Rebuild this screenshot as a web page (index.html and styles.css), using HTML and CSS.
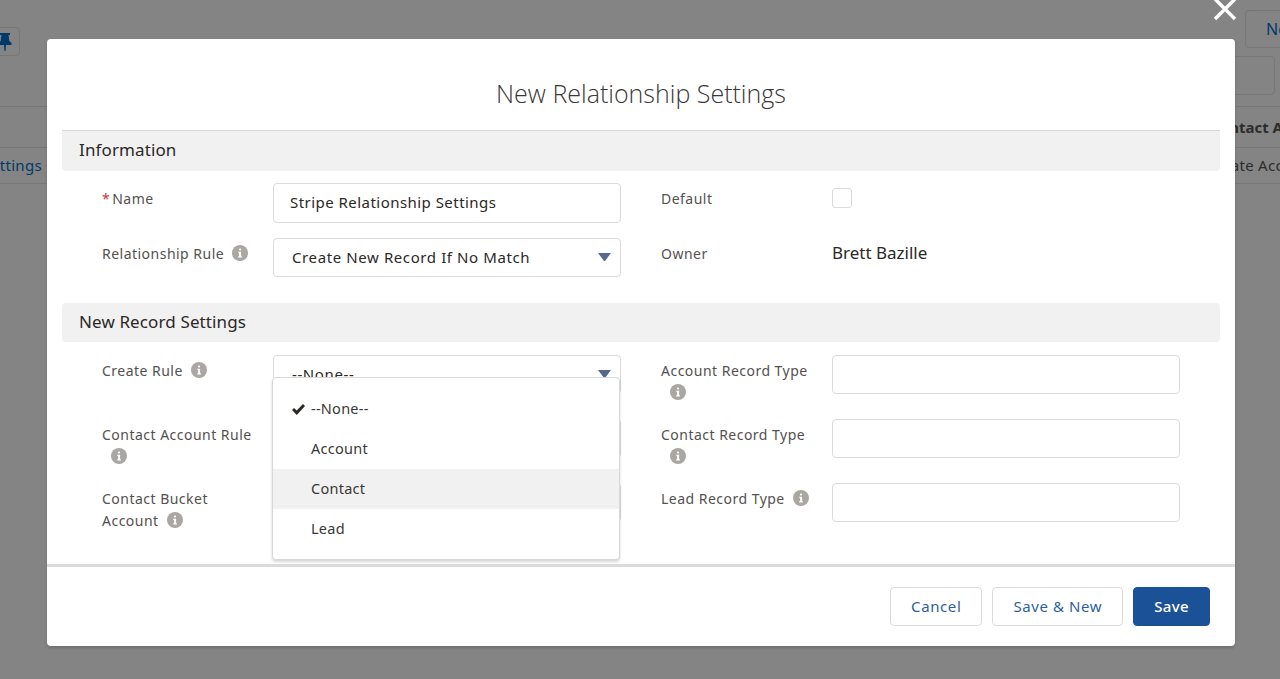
FILE: index.html
```html
<!DOCTYPE html>
<html lang="en">
<head>
<meta charset="utf-8">
<title>New Relationship Settings</title>
<link rel="stylesheet" href="styles.css">
</head>
<body>
<svg class="defs" width="0" height="0" aria-hidden="true">
  <symbol id="info" viewBox="0 0 16 16">
    <circle cx="8" cy="8" r="8" fill="#aaa7a2"/>
    <rect x="6.9" y="3.4" width="2.2" height="2.2" rx="1" fill="#fff"/>
    <path d="M6.3 6.8h2.8v4.4h.8v1.2H6.2v-1.2h.9V8H6.3z" fill="#fff"/>
  </symbol>
  <symbol id="caret" viewBox="0 0 13 8">
    <path d="M0 0h13L7 8h-1z" fill="#54698d"/>
  </symbol>
</svg>

<div class="page">
  <div class="page-actions">
    <button class="bg-btn pin-btn" type="button">
      <svg width="14" height="18" viewBox="0 0 14 18"><path d="M2 0h10v2H10.500l.8 6 2.200 2v2H8l-.5 6h-1L6 12H.5v-2l2.200-2 .8-6H2z" fill="#00396b"/></svg>
    </button>
    <div class="right-actions">
      <button class="bg-btn new-btn" type="button">New</button>
      <div class="bg-search"></div>
    </div>
  </div>
  <div class="bg-table">
    <div class="bg-head"><span>Contact A</span></div>
    <div class="bg-row"><a>Stripe Relationship Settings</a><span>Create Acc</span></div>
  </div>
</div>

<svg class="close" width="24" height="24" viewBox="0 0 24 24"><path d="M2 2l20 20M22 2L2 22" stroke="#fff" stroke-width="3.400" fill="none"/></svg>

<main class="modal">
  <h1 class="modal-title">New Relationship Settings</h1>

  <section class="section first">
    <h2 class="section-head">Information</h2>
    <div class="form-grid info-grid">
      <label class="lbl"><span class="req">*</span>Name</label>
      <div class="input name-input">Stripe Relationship Settings</div>
      <label class="lbl">Default</label>
      <div class="check-cell"><span class="checkbox"></span></div>

      <label class="lbl">Relationship Rule <svg class="info"><use href="#info"/></svg></label>
      <div class="input select">Create New Record If No Match<svg class="caret"><use href="#caret"/></svg></div>
      <label class="lbl">Owner</label>
      <div class="owner">Brett Bazille</div>
    </div>
  </section>

  <section class="section">
    <h2 class="section-head">New Record Settings</h2>
    <div class="form-grid record-grid">
      <label class="lbl">Create Rule <svg class="info"><use href="#info"/></svg></label>
      <div class="select-wrap">
        <div class="input select">--None--<svg class="caret"><use href="#caret"/></svg></div>
        <ul class="menu">
          <li class="menu-item">
            <svg class="tick" width="13" height="11" viewBox="0 0 13 11"><path d="M0 6l2-2 2.700 2.500L11 0l2 2-8.200 9z" fill="#2b2826"/></svg>--None--
          </li>
          <li class="menu-item">Account</li>
          <li class="menu-item hover">Contact</li>
          <li class="menu-item">Lead</li>
        </ul>
      </div>
      <label class="lbl">Account Record Type <svg class="info wrap-info"><use href="#info"/></svg></label>
      <div class="input"></div>

      <label class="lbl">Contact Account Rule <svg class="info wrap-info"><use href="#info"/></svg></label>
      <div class="input"></div>
      <label class="lbl">Contact Record Type <svg class="info wrap-info"><use href="#info"/></svg></label>
      <div class="input"></div>

      <label class="lbl narrow">Contact Bucket Account <svg class="info"><use href="#info"/></svg></label>
      <div class="input"></div>
      <label class="lbl">Lead Record Type <svg class="info"><use href="#info"/></svg></label>
      <div class="input"></div>
    </div>
  </section>

  <footer class="modal-footer">
    <button class="btn" type="button">Cancel</button>
    <button class="btn" type="button">Save &amp; New</button>
    <button class="btn primary" type="button">Save</button>
  </footer>
</main>
</body>
</html>
```

FILE: styles.css
```css
* { box-sizing: border-box; }
html, body { margin: 0; height: 679px; overflow: hidden; }
body {
  background: #848484;
  font-family: "Noto Sans", "Open Sans", sans-serif;
  color: #2b2826;
  font-size: 14px;
}
.defs { position: absolute; }

/* dimmed page behind the modal */
.page { height: 679px; overflow: hidden; }
.page-actions {
  display: flex;
  justify-content: space-between;
  height: 106px;
}
.bg-btn {
  background: #848484;
  border: 1px solid #767676;
  border-radius: 4px;
  font: inherit;
  color: #00396b;
  padding: 0;
}
.pin-btn {
  width: 30px;
  height: 29px;
  margin: 27px 0 0 -10px;
  display: flex;
  align-items: center;
  justify-content: center;
}
.right-actions { width: 45px; padding-top: 10px; margin-right: -10px; }
.new-btn {
  display: block;
  width: 55px;
  height: 38px;
  text-align: left;
  padding-left: 20px;
  font-size: 16px;
}
.bg-search {
  width: 55px;
  height: 39px;
  margin: 8px 0 0 -25px;
  border: 1px solid #767676;
  border-radius: 4px;
}
.bg-table { border-top: 1px solid #767676; }
.bg-head {
  height: 41px;
  border-bottom: 1px solid #767676;
  display: flex;
  justify-content: flex-end;
  align-items: center;
  font-weight: 700;
  font-size: 15px;
  color: #2e2c2a;
  margin-right: -3px;
  white-space: nowrap;
  overflow: hidden;
}
.bg-row {
  height: 36px;
  border-bottom: 1px solid #767676;
  display: flex;
  justify-content: space-between;
  align-items: center;
  font-size: 15px;
  letter-spacing: .3px;
  color: #2e2c2a;
  white-space: nowrap;
  overflow: hidden;
  padding-bottom: 1px;
}
.bg-row a { color: #00396b; margin-left: -160px; }
.bg-row span { margin-right: -3px; }

.close { position: absolute; left: 1213px; top: -3px; }

/* modal */
.modal {
  position: absolute;
  left: 47px;
  top: 39px;
  width: 1188px;
  height: 607px;
  background: #fff;
  border-radius: 4px;
  box-shadow: 0 2px 3px rgba(0, 0, 0, .16);
  padding: 0 15px;
}
.modal-title {
  margin: 0;
  height: 91px;
  padding-top: 36px;
  text-align: center;
  font-size: 25px;
  line-height: 36px;
  font-weight: 300;
  font-family: "Open Sans", "Noto Sans", sans-serif;
  color: #3a3836;
}
.section-head {
  margin: 0;
  height: 41px;
  line-height: 38px;
  padding-left: 17px;
  font-size: 17px;
  font-weight: 400;
  letter-spacing: .12px;
  background: #f1f1f1;
  border-radius: 0 0 4px 4px;
  color: #2b2826;
}
.first .section-head { border-top: 1px solid #d8d8d8; }
.section + .section .section-head { border-radius: 4px; height: 39px; }

.form-grid {
  display: grid;
  grid-template-columns: 171px 348px 211px 348px;
  padding-left: 40px;
}
.form-grid > :nth-child(4n + 3) { margin-left: 40px; }
.info-grid { padding-top: 12px; row-gap: 15px; grid-template-rows: 40px 39px; height: 132px; }
.record-grid { padding-top: 13px; row-gap: 25px; grid-template-rows: 39px 39px 39px; height: 222px; }

.lbl {
  display: block;
  font-size: 14px;
  letter-spacing: .48px;
  line-height: 22px;
  padding-top: 5px;
  padding-right: 10px;
  color: #54514f;
}
.narrow { padding-right: 30px; }
.req { color: #c23934; margin-right: 2px; }
.info { width: 16px; height: 16px; margin-left: 4px; vertical-align: -2px; }
.wrap-info { display: block; margin: 2px 0 0 9px; }

.input {
  position: relative;
  border: 1px solid #dcdbda;
  border-radius: 4px;
  background: #fff;
  font-size: 15px;
  letter-spacing: .6px;
  line-height: 37px;
  padding-left: 16px;
  color: #2b2826;
}
.name-input { line-height: 36px; letter-spacing: .46px; }
.select { padding-left: 18px; }
.caret { position: absolute; right: 9px; top: 14px; width: 13px; height: 8px; }
.check-cell { padding-top: 5px; }
.checkbox {
  display: block;
  width: 20px;
  height: 20px;
  border: 1px solid #dcdbda;
  border-radius: 3px;
}
.owner { font-size: 17px; line-height: 30px; color: #2b2826; }

/* open dropdown */
.select-wrap { position: relative; }
.select-wrap .select { height: 39px; }
.menu {
  position: absolute;
  z-index: 2;
  left: -1px;
  top: 22px;
  width: 348px;
  height: 183px;
  margin: 0;
  padding: 11px 0 0;
  list-style: none;
  background: #fff;
  border: 1px solid #d8d8d8;
  border-radius: 4px;
  box-shadow: 0 2px 3px rgba(0, 0, 0, .16);
}
.menu-item {
  position: relative;
  height: 40px;
  line-height: 39px;
  padding-left: 38px;
  font-size: 14.5px;
  letter-spacing: .25px;
  color: #3a3836;
}
.hover { background: #f1f1f1; }
.tick { position: absolute; left: 19px; top: 15px; }

/* footer */
.modal-footer {
  margin: 0 -15px;
  border-top: 3px solid #dddbda;
  display: flex;
  justify-content: flex-end;
  gap: 10px;
  padding: 20px 25px 0 0;
  height: 82px;
}
.btn {
  height: 39px;
  padding: 0 20px 2px;
  border: 1px solid #dddbda;
  border-radius: 4px;
  background: #fff;
  color: #2f5f9e;
  font: 15px "Noto Sans", "Open Sans", sans-serif;
  letter-spacing: .6px;
}
.primary {
  background: #1b5297;
  border-color: #1b5297;
  color: #fff;
  font-weight: 500;
  letter-spacing: .35px;
}
```
